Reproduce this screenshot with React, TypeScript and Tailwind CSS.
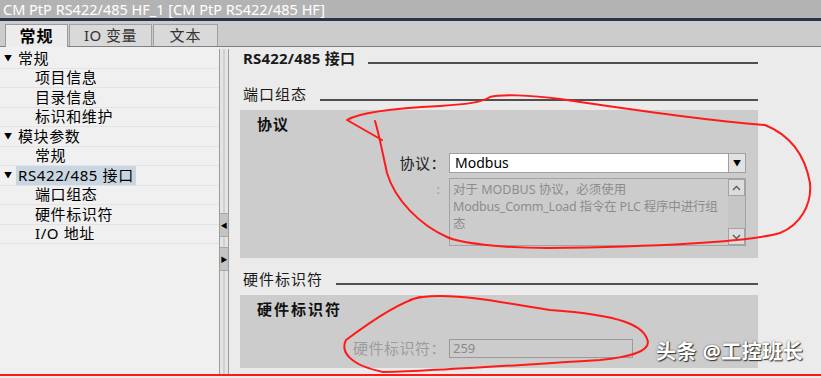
const font = 'font-["Noto_Sans","Noto_Sans_CJK_SC",sans-serif]';

const tree = [
  { label: '常规', level: 1 },
  { label: '项目信息', level: 2 },
  { label: '目录信息', level: 2 },
  { label: '标识和维护', level: 2 },
  { label: '模块参数', level: 1 },
  { label: '常规', level: 2 },
  { label: 'RS422/485 接口', level: 1, active: true },
  { label: '端口组态', level: 2 },
  { label: '硬件标识符', level: 2 },
  { label: 'I/O 地址', level: 2 },
];

function TreeRow({ label, level, active }: { label: string; level: number; active?: boolean }) {
  return (
    <div className="h-[19.5px] flex items-center border-b border-[#e3e3e3]">
      {level === 1 ? (
        <>
          <span className="w-[18px] pl-[4px] text-[8px] leading-none text-black">▼</span>
          <span className={`px-[2px] -ml-[2px] text-[15px] tracking-[0.6px] leading-[19px] text-black ${active ? 'bg-[#c9d5e1]' : ''}`}>
            {label}
          </span>
        </>
      ) : (
        <span className="pl-[35px] text-[15px] tracking-[0.6px] leading-[19px] text-black">{label}</span>
      )}
    </div>
  );
}

function SectionHeader({ title, bold, lineMb }: { title: string; bold?: boolean; lineMb: string }) {
  return (
    <div className="h-[20px] flex items-end gap-[13px] pl-[3px]">
      <span className={`self-center text-[15px] leading-[20px] text-[#1a1a1a] ${bold ? 'font-bold tracking-[0.2px]' : 'tracking-[1px]'}`}>
        {title}
      </span>
      <div className={`flex-1 h-[2px] bg-[#4f4f4f] ${lineMb}`} />
    </div>
  );
}

function Splitter() {
  return (
    <div className="w-[10px] mt-[2px] border-x border-[#9c9c9c] bg-[#e4e4e4] flex flex-col relative">
      <div className="absolute inset-y-0 left-[3px] w-[2px] bg-[#d0d0d0]" />
      <div className="mt-[164px] h-[24px] bg-[#c4c4c4] border-y border-[#a8a8a8] relative flex items-center justify-center">
        <span className="text-[7px] leading-none text-black">◀</span>
      </div>
      <div className="mt-[10px] h-[24px] bg-[#c4c4c4] border-y border-[#a8a8a8] relative flex items-center justify-center">
        <span className="text-[7px] leading-none text-black">▶</span>
      </div>
    </div>
  );
}

function Annotations() {
  return (
    <svg className="absolute inset-0 pointer-events-none" width="821" height="378" viewBox="0 0 821 378" fill="none">
      <path
        d="M 382 140 L 347 120 C 360 112, 400 108, 440 106 C 470 104, 482 102, 490 97 C 500 94, 530 95, 560 99 C 620 108, 700 120, 765 125 C 790 135, 805 155, 810 183 C 812 205, 800 225, 780 233 C 750 242, 650 247, 547 248 C 500 248, 460 243, 447 237 C 420 225, 395 200, 387 173 C 382 150, 378 130, 375 121"
        stroke="#ff1a1a"
        strokeWidth="2"
        strokeLinecap="round"
        strokeLinejoin="round"
      />
      <path
        d="M 420 297 C 400 302, 370 322, 346 340 C 340 352, 350 365, 383 372 C 420 372, 500 366, 600 360 C 630 357, 648 352, 648 342 C 645 325, 620 315, 550 310 C 500 302, 470 296, 440 296 C 425 296, 415 298, 410 300"
        stroke="#ff1a1a"
        strokeWidth="2"
        strokeLinecap="round"
        strokeLinejoin="round"
      />
      <rect x="0" y="374" width="821" height="2" fill="#ff1a1a" />
    </svg>
  );
}

export default function App() {
  return (
    <div className={`relative w-[821px] h-[378px] overflow-hidden bg-[#ebebeb] ${font}`}>
      {/* title bar */}
      <div className="h-[18px] bg-[#b3b3b3] flex items-center pl-[3px]">
        <span className="text-[14.5px] leading-none text-white">CM PtP RS422/485 HF_1 [CM PtP RS422/485 HF]</span>
      </div>
      <div className="h-[3px] bg-[#2b3349]" />

      {/* tabs */}
      <div className="h-[26px] bg-[#cccccc] border-b border-[#808080] flex items-end pl-[5px] gap-[1px]">
        <div className="w-[63px] h-[23px] -mb-px bg-[#ececec] border border-b-0 border-[#9a9a9a] flex items-center justify-center">
          <span className="text-[16px] font-bold tracking-[1px] text-black leading-none">常规</span>
        </div>
        <div className="w-[83px] h-[22px] bg-[#d9d9d9] border border-b-0 border-[#a0a0a0] flex items-center justify-center">
          <span className="text-[15px] tracking-[0.5px] text-[#333] leading-none">IO 变量</span>
        </div>
        <div className="w-[65px] h-[22px] bg-[#d9d9d9] border border-b-0 border-[#a0a0a0] flex items-center justify-center">
          <span className="text-[15px] tracking-[1px] text-[#333] leading-none">文本</span>
        </div>
      </div>

      {/* main */}
      <div className="h-[327px] flex">
        <div className="w-[219px] bg-[#f0f0f0] pt-[2px]">
          {tree.map((t, i) => (
            <TreeRow key={i} {...t} />
          ))}
        </div>
        <Splitter />
        <div className="w-[529px] pl-[11px] pt-[1px]">
          <SectionHeader title="RS422/485 接口" bold lineMb="mb-[4px]" />
          <div className="mt-[16px]">
            <SectionHeader title="端口组态" lineMb="mb-[3px]" />
          </div>

          {/* protocol box */}
          <div className="mt-[6px] h-[148px] bg-[#cccccc] pt-[4px]">
            <div className="h-[20px] pl-[17px] flex items-center">
              <span className="text-[15px] font-bold tracking-[1px] text-[#111]">协议</span>
            </div>
            <div className="mt-[19px] flex items-center">
              <span className="w-[206px] -mr-[3px] text-right text-[15px] tracking-[0.5px] text-[#222] leading-none">协议：</span>
              <div className="ml-[6px] w-[297px] h-[20px] bg-white border border-[#a0a0a0] flex items-center">
                <span className="flex-1 pl-[5px] text-[14px] text-black leading-none">Modbus</span>
                <div className="w-[17px] h-full border-l border-[#a0a0a0] bg-[#e2e2e2] flex items-center justify-center">
                  <span className="text-[8px] leading-none text-black">▼</span>
                </div>
              </div>
            </div>
            <div className="mt-[5px] flex">
              <span className="w-[206px] pr-[6px] pt-[3px] text-right text-[13px] text-[#9a9a9a] leading-[17px]">:</span>
              <div className="ml-[3px] w-[297px] h-[68px] border border-[#a3a3a3] flex">
                <div className="flex-1 pl-[3px] pt-[2px] text-[12.5px] leading-[17px] text-[#8c8c8c] whitespace-nowrap overflow-hidden">
                  <div>对于 MODBUS 协议，必须使用</div>
                  <div className="tracking-[-0.2px]">Modbus_Comm_Load 指令在 PLC 程序中进行组</div>
                  <div>态</div>
                </div>
                <div className="w-[17px] flex flex-col justify-between bg-[#c6c6c6]">
                  <div className="h-[17px] bg-[#dcdcdc] border border-[#a3a3a3] flex items-center justify-center">
                    <svg width="9" height="6" viewBox="0 0 9 6"><path d="M1 5 L4.5 1.5 L8 5" stroke="#555" strokeWidth="1.3" fill="none" /></svg>
                  </div>
                  <div className="h-[17px] bg-[#dcdcdc] border border-[#a3a3a3] flex items-center justify-center">
                    <svg width="9" height="6" viewBox="0 0 9 6"><path d="M1 1 L4.5 4.5 L8 1" stroke="#555" strokeWidth="1.3" fill="none" /></svg>
                  </div>
                </div>
              </div>
            </div>
          </div>

          <div className="mt-[11px]">
            <SectionHeader title="硬件标识符" lineMb="mb-[4px]" />
          </div>

          {/* hardware id box */}
          <div className="mt-[6px] h-[73px] bg-[#cccccc] pt-[4px]">
            <div className="h-[20px] pl-[17px] flex items-center">
              <span className="text-[15px] font-bold tracking-[2px] text-[#111]">硬件标识符</span>
            </div>
            <div className="mt-[20px] flex items-center">
              <span className="w-[206px] -mr-[3px] text-right text-[15px] tracking-[0.5px] text-[#9c9c9c] leading-none">硬件标识符：</span>
              <div className="ml-[6px] w-[184px] h-[19px] border border-[#9a9a9a] flex items-center pl-[3px]">
                <span className="text-[13px] text-[#8a8a8a] leading-none">259</span>
              </div>
            </div>
          </div>
        </div>
      </div>

      <Annotations />

      {/* watermark */}
      <div className="absolute left-[656px] top-[341px]">
        <span className="text-[20px] font-bold tracking-[0.5px] text-white leading-none [text-shadow:1px_1px_1px_#333,0_0_2px_#555]">头条 @工控班长</span>
      </div>
    </div>
  );
}
